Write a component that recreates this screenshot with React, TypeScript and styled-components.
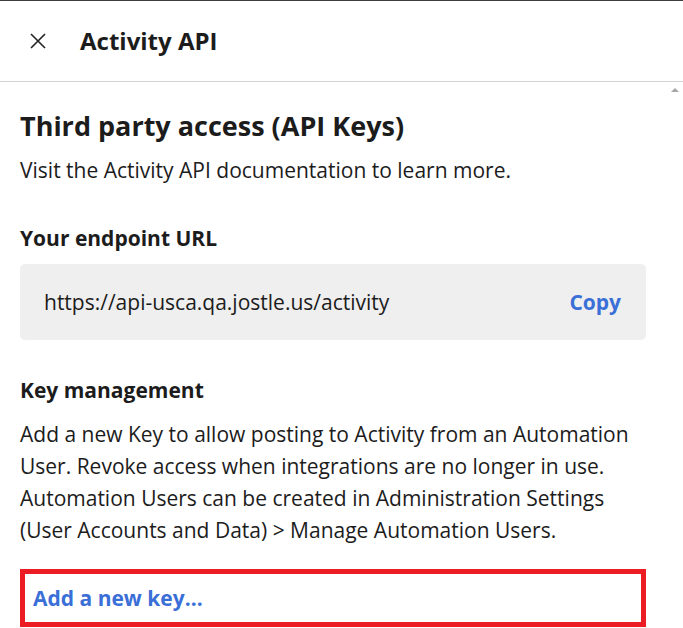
import React from 'react'
import styled, { createGlobalStyle } from 'styled-components'

const GlobalStyle = createGlobalStyle`
  html, body {
    margin: 0;
    padding: 0;
    background: #fff;
  }
  body {
    font-family: 'Open Sans', 'Noto Sans', sans-serif;
    color: #1c1c1c;
  }
`

const Panel = styled.div`
  display: flex;
  flex-direction: column;
  width: 683px;
  height: 628px;
  border-top: 1px solid #3d3d3d;
  box-sizing: border-box;
  overflow: hidden;
`

const Header = styled.header`
  display: flex;
  align-items: center;
  gap: 34px;
  height: 80px;
  padding-left: 30px;
  border-bottom: 1px solid #d4d4d4;
  flex-shrink: 0;
`

const CloseButton = styled.button`
  display: flex;
  padding: 0;
  border: 0;
  background: none;
  color: #222;
  cursor: pointer;
`

const Title = styled.h1`
  margin: 0;
  font-size: 24px;
  font-weight: 700;
  line-height: 32px;
`

const Body = styled.div`
  display: flex;
  flex: 1;
  min-height: 0;
`

const Content = styled.main`
  flex: 1;
  display: flex;
  flex-direction: column;
  padding: 27px 20px 0;

  & > * {
    flex-shrink: 0;
  }
`

const ScrollGutter = styled.div`
  width: 17px;
  display: flex;
  justify-content: center;
  padding-top: 6px;
`

const ScrollArrow = styled.span`
  width: 0;
  height: 0;
  border-left: 4px solid transparent;
  border-right: 4px solid transparent;
  border-bottom: 4px solid #a6a6a6;
`

const Heading = styled.h2`
  margin: 0;
  font-size: 27px;
  line-height: 34px;
  font-weight: 700;
`

const Text = styled.p<{ $top: number }>`
  margin: ${p => p.$top}px 0 0;
  font-size: 21px;
  line-height: 28px;
`

const Paragraph = styled.p`
  margin: 14px 0 0;
  font-size: 21px;
  line-height: 32px;
`

const SubHeading = styled.h3<{ $top: number }>`
  margin: ${p => p.$top}px 0 0;
  font-size: 21px;
  line-height: 28px;
  font-weight: 700;
`

const UrlBox = styled.div`
  display: flex;
  align-items: center;
  justify-content: space-between;
  height: 76px;
  margin-top: 12px;
  padding: 0 25px 0 24px;
  background: #efefef;
  border-radius: 5px;
  font-size: 21px;
`

const LinkButton = styled.button`
  padding: 0;
  border: 0;
  background: none;
  font-family: inherit;
  font-size: 21px;
  line-height: 28px;
  font-weight: 700;
  color: #3a6fd8;
  cursor: pointer;
`

const Highlight = styled.div`
  margin-top: 23px;
  padding: 10px 8px;
  border: 5px solid #ec1c24;
`

const CloseIcon = () => (
  <svg width="16" height="16" viewBox="0 0 16 16" fill="none">
    <path d="M1 1L15 15M15 1L1 15" stroke="currentColor" strokeWidth="1.6" />
  </svg>
)

const App: React.FC = () => (
  <>
    <GlobalStyle />
    <Panel>
      <Header>
        <CloseButton aria-label="Close">
          <CloseIcon />
        </CloseButton>
        <Title>Activity API</Title>
      </Header>
      <Body>
        <Content>
          <Heading>Third party access (API Keys)</Heading>
          <Text $top={13}>Visit the Activity API documentation to learn more.</Text>
          <SubHeading $top={40}>Your endpoint URL</SubHeading>
          <UrlBox>
            <span>https://api-usca.qa.jostle.us/activity</span>
            <LinkButton>Copy</LinkButton>
          </UrlBox>
          <SubHeading $top={36}>Key management</SubHeading>
          <Paragraph>
            Add a new Key to allow posting to Activity from an Automation User. Revoke access when
            integrations are no longer in use. Automation Users can be created in Administration
            Settings (User Accounts and Data) &gt; Manage Automation Users.
          </Paragraph>
          <Highlight>
            <LinkButton>Add a new key...</LinkButton>
          </Highlight>
        </Content>
        <ScrollGutter>
          <ScrollArrow />
        </ScrollGutter>
      </Body>
    </Panel>
  </>
)

export default App
